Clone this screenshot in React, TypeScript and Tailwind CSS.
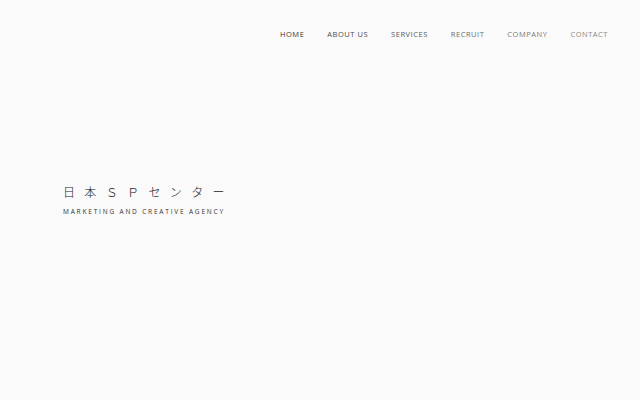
const navItems = [
  { label: 'HOME', color: 'text-[#3a3a3a]' },
  { label: 'ABOUT US', color: 'text-[#4a4a4a]' },
  { label: 'SERVICES', color: 'text-[#5a5a5a]' },
  { label: 'RECRUIT', color: 'text-[#6a6a6a]' },
  { label: 'COMPANY', color: 'text-[#7a7a7a]' },
  { label: 'CONTACT', color: 'text-[#8a8a8a]' },
]

export default function App() {
  return (
    <div
      className="w-[640px] h-[400px] bg-[#fafafa] flex flex-col"
      style={{ fontFamily: '"Open Sans", "Noto Sans CJK JP", sans-serif' }}
    >
      {/* Header nav */}
      <header className="flex justify-end pt-[29px] pr-[32px]">
        <nav className="flex items-center gap-[23px]">
          {navItems.map((item) => (
            <a
              key={item.label}
              href="#"
              className={`text-[7.5px] leading-[10px] tracking-[0.07em] ${item.color}`}
            >
              {item.label}
            </a>
          ))}
        </nav>
      </header>

      {/* Hero logo */}
      <div className="pl-[63px] pt-[146px]">
        <h1
          className="text-[12px] leading-[14px] font-light tracking-[0.78em] text-[#222]"
          style={{ fontFamily: '"Noto Sans CJK JP", sans-serif' }}
        >
          日本ＳＰセンター
        </h1>
        <p className="mt-[9px] text-[6.5px] leading-[8px] tracking-[0.28em] text-[#333]">
          MARKETING AND CREATIVE AGENCY
        </p>
      </div>
    </div>
  )
}
